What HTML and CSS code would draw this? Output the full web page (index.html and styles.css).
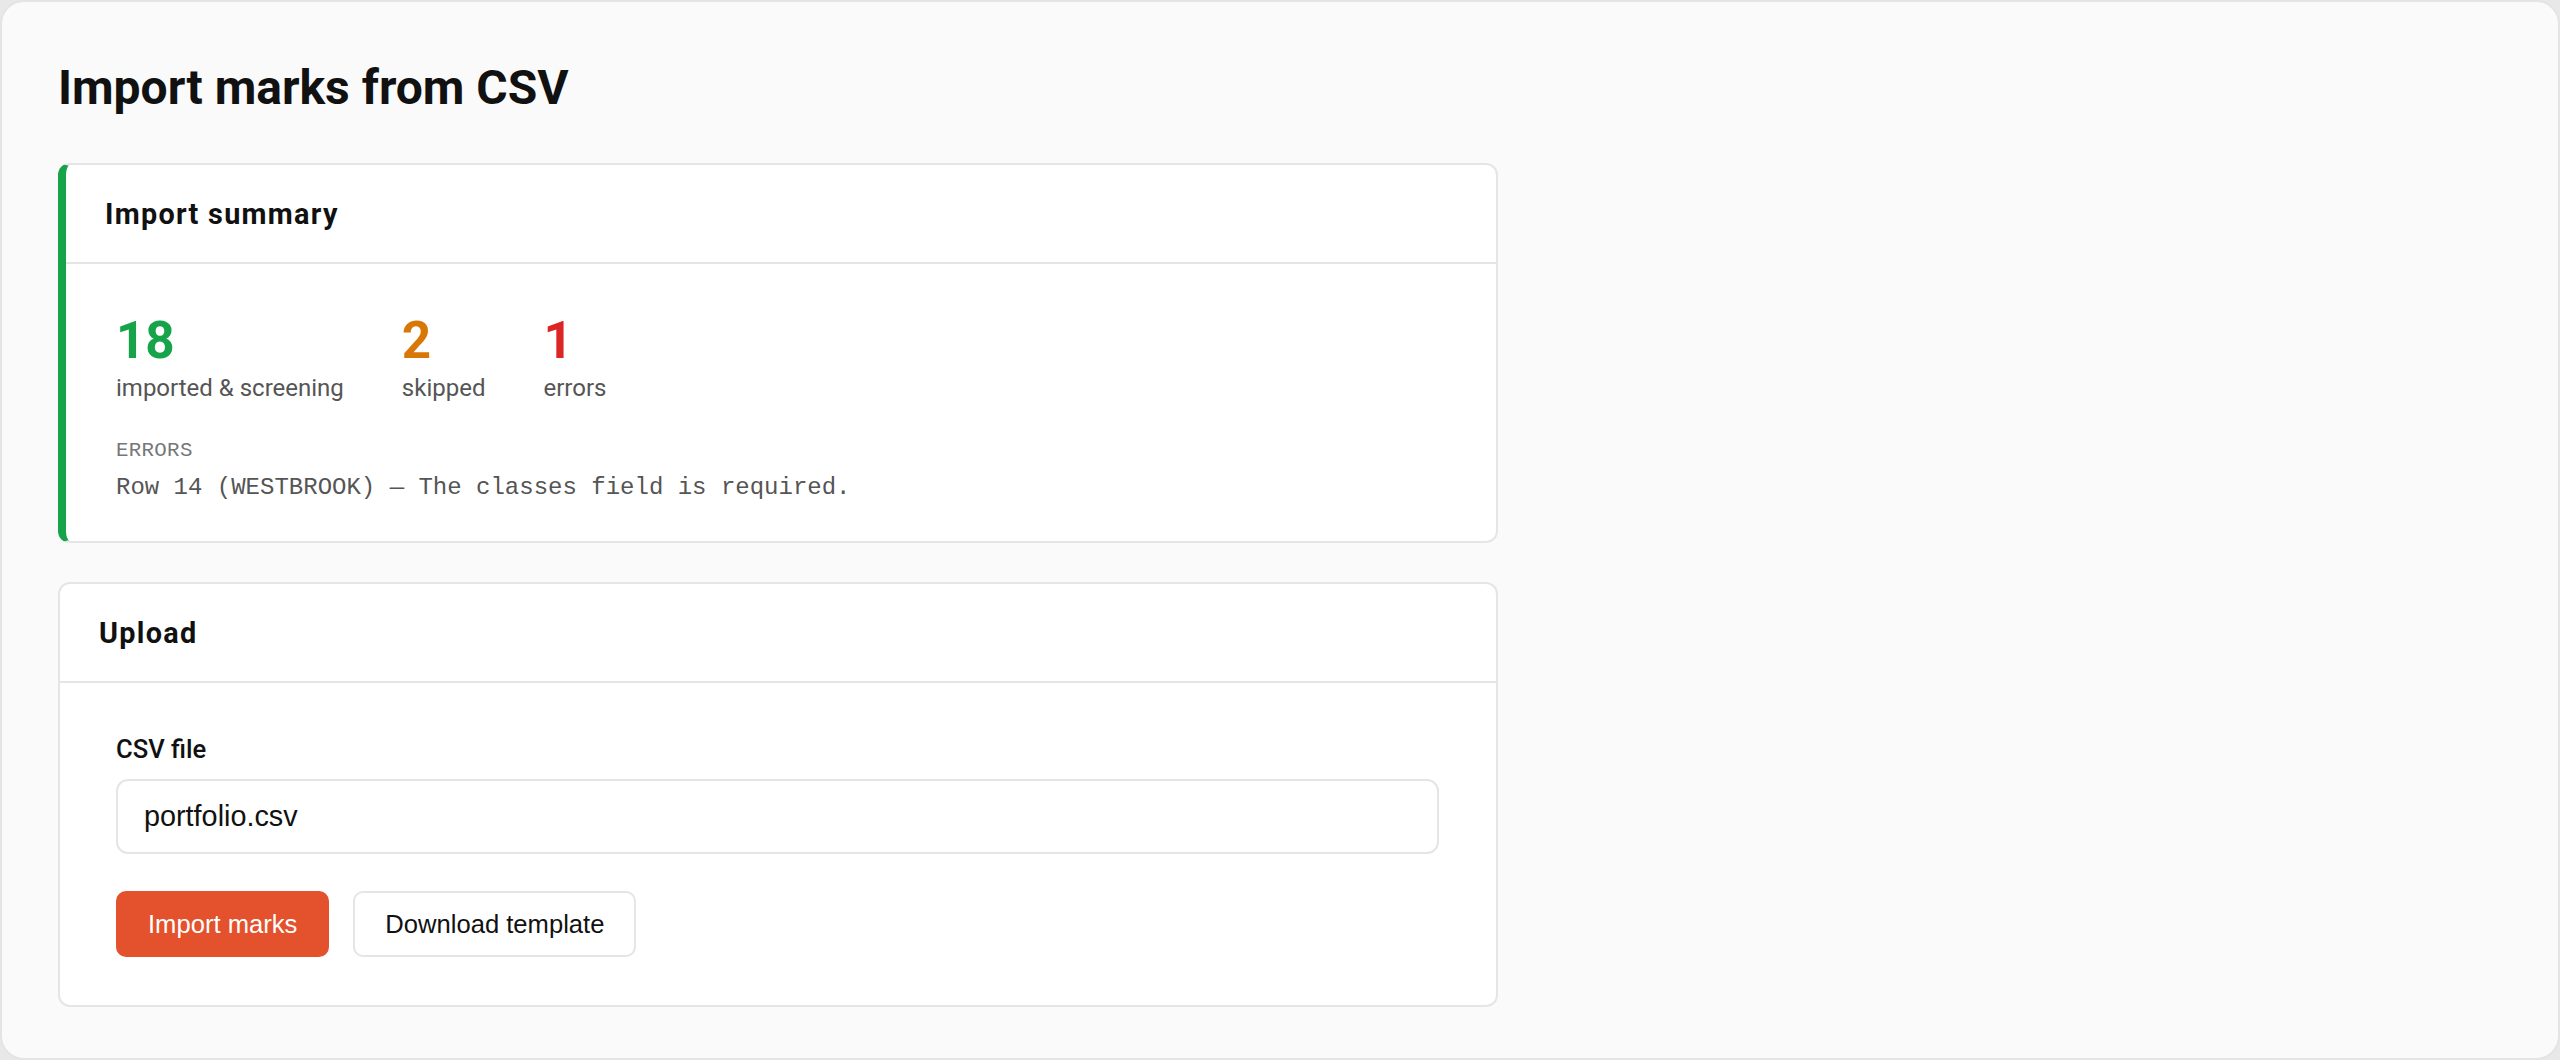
FILE: index.html
```html
<!DOCTYPE html>
<html lang="en">

<head>
    <meta charset="UTF-8">
    <title>Import marks from CSV</title>
    <link rel="stylesheet" href="styles.css">
</head>

<body>

    <div class="frame">
        <main class="page">
            <h1 class="page-title">Import marks from CSV</h1>

            <section class="card card-ok">
                <header class="card-head">
                    <h2>Import summary</h2>
                </header>
                <div class="card-body summary">
                    <div class="stats">
                        <div class="stat">
                            <div class="stat-num num-ok">18</div>
                            <div class="stat-label">imported &amp; screening</div>
                        </div>
                        <div class="stat">
                            <div class="stat-num num-warn">2</div>
                            <div class="stat-label">skipped</div>
                        </div>
                        <div class="stat">
                            <div class="stat-num num-err">1</div>
                            <div class="stat-label">errors</div>
                        </div>
                    </div>
                    <div class="err-title">ERRORS</div>
                    <div class="err-line">Row 14 (WESTBROOK) — The classes field is required.</div>
                </div>
            </section>

            <section class="card">
                <header class="card-head">
                    <h2>Upload</h2>
                </header>
                <form class="card-body upload">
                    <label class="field-label" for="csv">CSV file</label>
                    <input class="file-input" id="csv" type="text" value="portfolio.csv" readonly>
                    <div class="actions">
                        <button type="button" class="btn btn-primary">Import marks</button>
                        <button type="button" class="btn">Download template</button>
                    </div>
                </form>
            </section>
        </main>
    </div>

</body>

</html>
```

FILE: styles.css
```css
html {
    background-color: #e8e8e8;
}

body {
    margin: 0;
    font-family: Roboto, "Liberation Sans", Arial, sans-serif;
    color: #111;
}

.frame {
    height: 1060px;
    box-sizing: border-box;
    background-color: #fafafa;
    border: 2px solid #e4e4e4;
    border-radius: 24px;
    overflow: hidden;
}

.page {
    padding: 57px 56px 0;
    max-width: 1440px;
}

.page-title {
    margin: 0 0 46px;
    font-size: 48px;
    line-height: 58px;
    font-weight: 700;
}

/* 卡片 */
.card {
    background-color: #fff;
    border: 2px solid #e5e5e5;
    border-radius: 12px;
    margin-bottom: 39px;
}

.card-ok {
    border-left: 8px solid #16a34a;
}

.card-head {
    padding: 31px 39px 30px;
    border-bottom: 2px solid #e5e5e5;
}

.card-head h2 {
    margin: 0;
    font-size: 28.8px;
    line-height: 36px;
    font-weight: 700;
    letter-spacing: 1.3px;
}

.summary {
    padding: 51px 50px 37px;
}

.stats {
    display: flex;
    gap: 58px;
}

.stat-num {
    font-size: 51.2px;
    line-height: 51.2px;
    font-weight: 700;
}

.num-ok {
    color: #16a34a;
}

.num-warn {
    color: #d97706;
}

.num-err {
    color: #dc2626;
}

.stat-label {
    margin-top: 6px;
    font-size: 24px;
    line-height: 32px;
    color: #555;
}

.err-title {
    margin-top: 33px;
    font-family: "Liberation Mono", "DejaVu Sans Mono", monospace;
    font-size: 20.8px;
    line-height: 28px;
    letter-spacing: 0.3px;
    color: #777;
}

.err-line {
    margin-top: 7px;
    font-family: "Liberation Mono", "DejaVu Sans Mono", monospace;
    font-size: 24px;
    line-height: 32px;
    color: #555;
}

/* 上传表单 */
.upload {
    display: flex;
    flex-direction: column;
    padding: 50px 57px 48px 56px;
}

.field-label {
    font-size: 25.6px;
    line-height: 32px;
    font-weight: 500;
}

.file-input {
    margin-top: 14px;
    height: 75px;
    box-sizing: border-box;
    padding: 0 26px;
    border: 2px solid #e5e5e5;
    border-radius: 12px;
    background-color: #fff;
    font-family: "Liberation Sans", Arial, sans-serif;
    font-size: 28.8px;
    color: #111;
    outline: none;
}

.actions {
    display: flex;
    gap: 24px;
    margin-top: 37px;
}

.btn {
    height: 66px;
    padding: 0 30px;
    border: 2px solid #e5e5e5;
    border-radius: 10px;
    background-color: #fff;
    font-family: "Liberation Sans", Arial, sans-serif;
    font-size: 25.6px;
    color: #111;
}

.btn-primary {
    background-color: #e4512d;
    border-color: #e4512d;
    color: #fff;
}
```
